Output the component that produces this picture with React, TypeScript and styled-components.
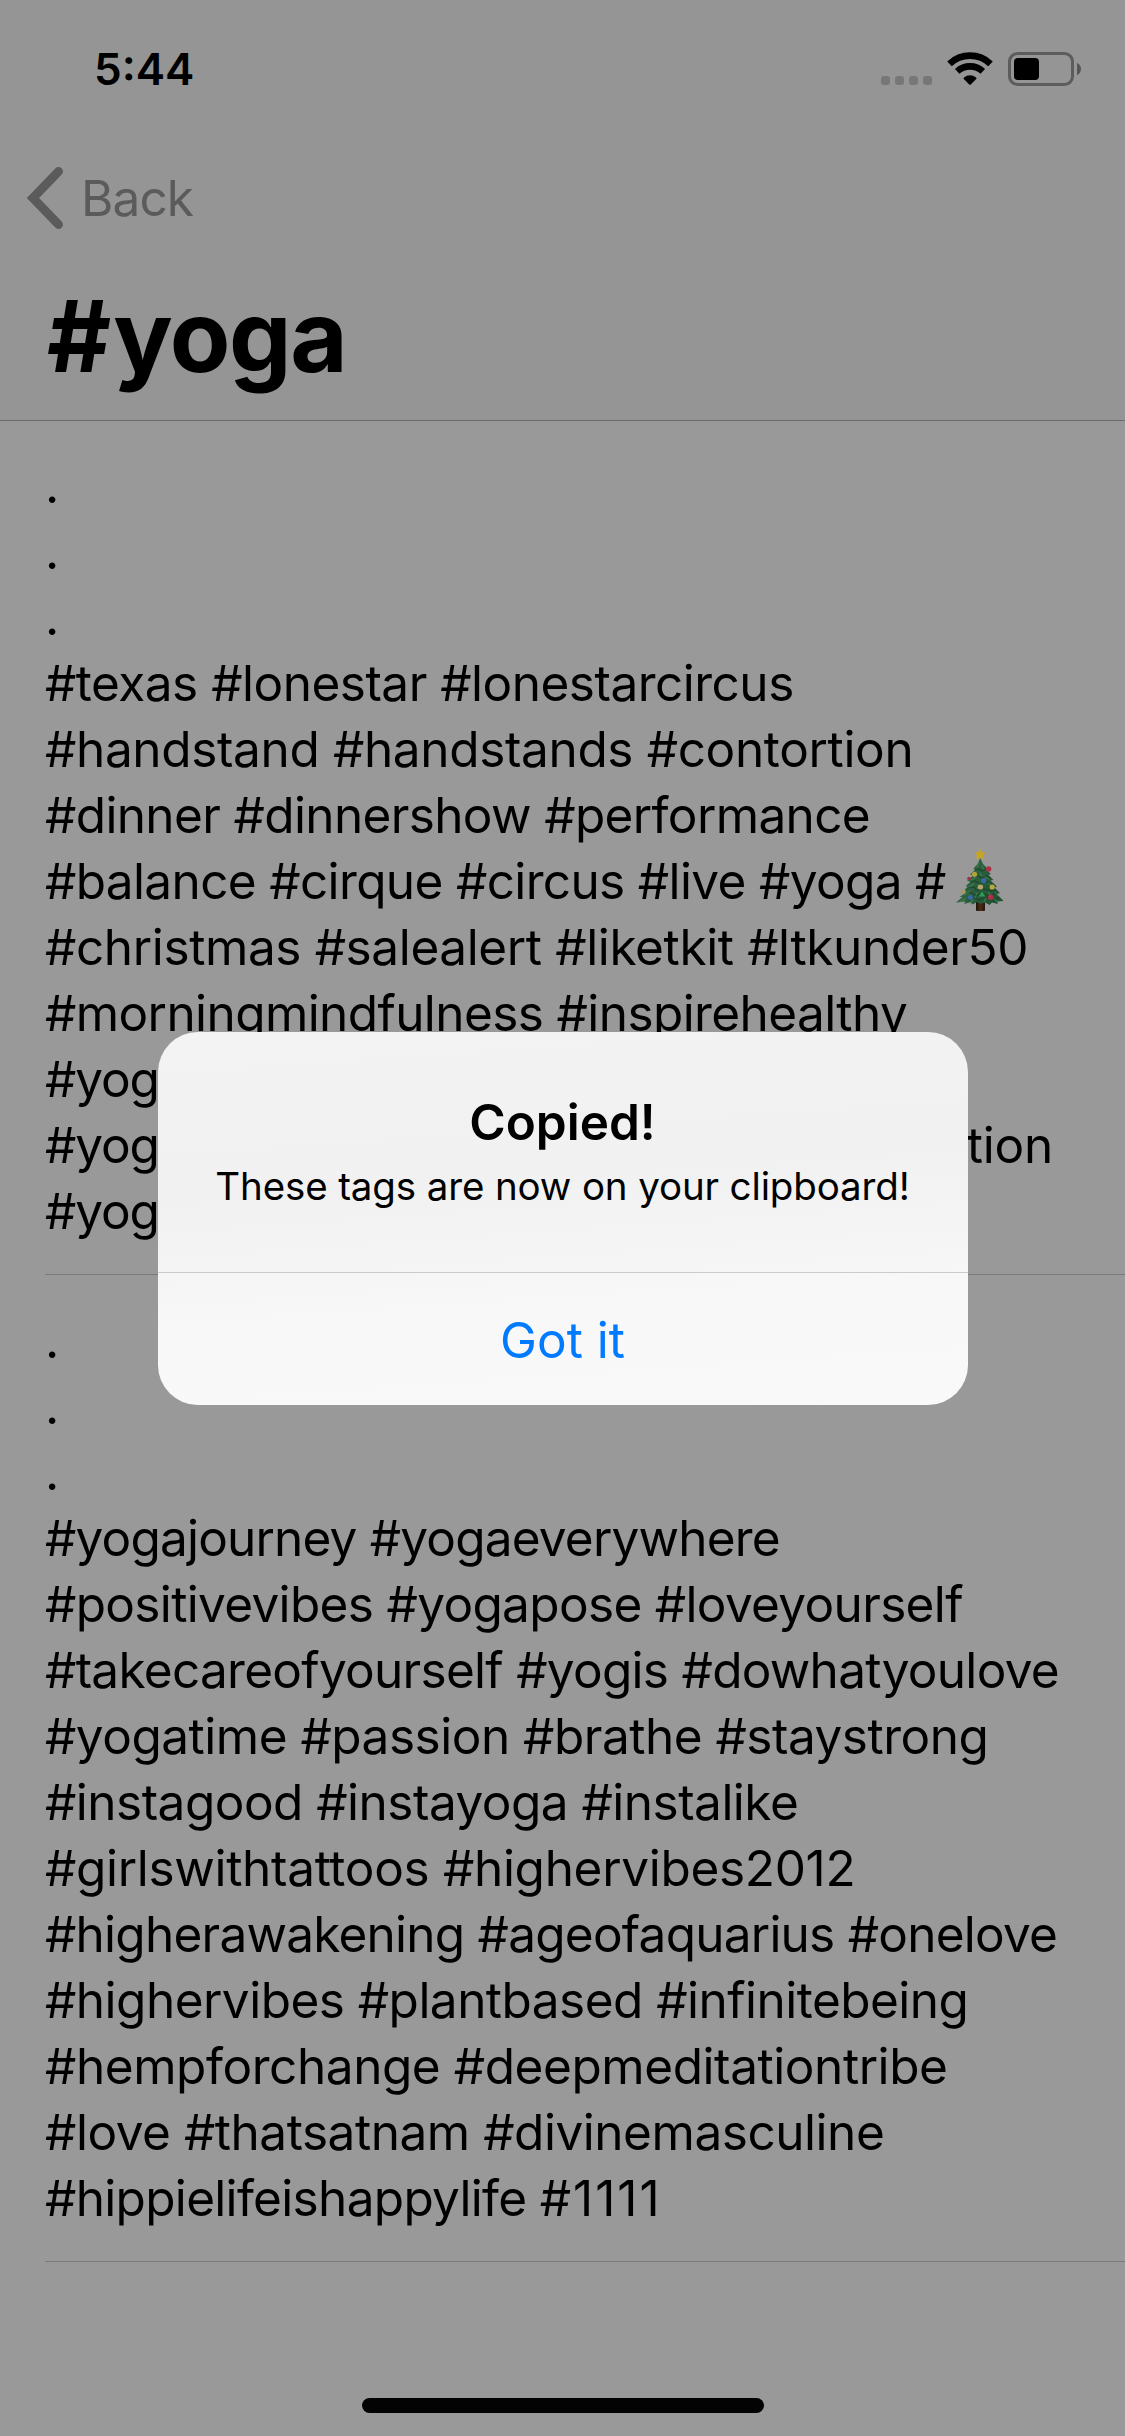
import React from 'react';
import styled, { createGlobalStyle } from 'styled-components';

const GlobalStyle = createGlobalStyle`
  *, *::before, *::after { box-sizing: border-box; }
  body {
    margin: 0;
    background: #999999;
    font-family: Inter, "Liberation Sans", sans-serif;
  }
`;

const Screen = styled.div`
  position: relative;
  display: flex;
  flex-direction: column;
  width: 1125px;
  height: 2436px;
  overflow: hidden;
  background: #999999;
  color: #000;
`;

const Header = styled.header`
  height: 421px;
  background: #959595;
  border-bottom: 1px solid #6b6b6b;
`;

const StatusBar = styled.div`
  display: flex;
  justify-content: space-between;
  height: 132px;
  padding: 42px 44px 0 94px;
`;

const Clock = styled.span`
  font-size: 44px;
  font-weight: 600;
  line-height: 54px;
`;

const StatusIcons = styled.div`
  display: flex;
  align-items: flex-end;
  gap: 15px;
  height: 44px;
`;

const SignalDots = styled.div`
  display: flex;
  gap: 5px;
  padding-bottom: 1px;
`;

const SignalDot = styled.i`
  width: 9px;
  height: 9px;
  border-radius: 3px;
  background: #777777;
`;

const WifiIcon = styled.svg`
  display: block;
  width: 46px;
  height: 33px;
  margin-bottom: 1px;
`;

const BatteryIcon = styled.svg`
  display: block;
  width: 73px;
  height: 34px;
`;

const NavBar = styled.nav`
  display: flex;
  align-items: center;
  height: 132px;
  padding-left: 26px;
`;

const BackButton = styled.button`
  display: flex;
  align-items: center;
  gap: 17px;
  padding: 0;
  border: 0;
  background: none;
  color: #5b5b5b;
  font: inherit;
  font-size: 49.5px;
  line-height: 60px;
  letter-spacing: -0.9px;
`;

const Chevron = styled.svg`
  display: block;
  width: 38px;
  height: 64px;
`;

const Title = styled.h1`
  margin: 12px 0 0 47px;
  font-size: 99px;
  font-weight: 700;
  line-height: 120px;
  letter-spacing: -1.4px;

  &::first-letter {
    letter-spacing: 2px;
  }
`;

const List = styled.main`
  flex: 1;
`;

const TagRow = styled.section`
  margin-left: 45px;
  padding: 31px 0 30px;
  border-bottom: 1px solid #7a7a7a;

  & + & {
    padding-top: 32px;
  }
`;

const Line = styled.p<{ $tracking?: number }>`
  display: flex;
  height: 66px;
  margin: 0;
  font-size: 49.5px;
  line-height: 66px;
  letter-spacing: ${({ $tracking = -0.5 }) => $tracking}px;
  white-space: pre;
`;

const LineEnd = styled.span`
  margin-left: auto;
  margin-right: 72px;
  letter-spacing: -0.2px;
`;

const Digits = styled.span`
  letter-spacing: 2px;
`;

const Tree = styled.svg`
  display: block;
  width: 60px;
  height: 72px;
  margin: -4px 0 0 5px;
`;

const HomeArea = styled.footer`
  display: flex;
  justify-content: center;
  height: 38px;
`;

const HomeIndicator = styled.div`
  width: 402px;
  height: 15px;
  border-radius: 8px;
  background: #030303;
`;

const Overlay = styled.div`
  position: absolute;
  inset: 0;
  display: flex;
  justify-content: center;
  align-items: flex-start;
  padding: 1032px 0 0 1px;
`;

const Dialog = styled.div`
  display: flex;
  flex-direction: column;
  width: 810px;
  height: 373px;
  border-radius: 40px;
  overflow: hidden;
  background: linear-gradient(176deg, #f3f3f3 0%, #f1f1f1 38%, #f5f5f5 62%, #f8f8f8 74%, #f9f9f9 100%);
`;

const DialogBody = styled.div`
  height: 240px;
  padding: 60px 1px 0 0;
  text-align: center;
`;

const DialogTitle = styled.h2`
  margin: 0;
  font-size: 49.5px;
  font-weight: 600;
  line-height: 60px;
`;

const DialogText = styled.p`
  margin: 10px 0 0;
  font-size: 38.5px;
  line-height: 48px;
  letter-spacing: -0.13px;
`;

const DialogAction = styled.button`
  flex: 1;
  padding: 2px 1px 0 0;
  border: 0;
  border-top: 1px solid #cbcbcb;
  background: rgba(255, 255, 255, 0.12);
  color: #007aff;
  font: inherit;
  font-size: 49.5px;
  line-height: 60px;
`;

type TagLine = { text: string; tracking?: number; tree?: boolean; end?: string; digits?: string };

const dots: TagLine[] = [{ text: '.' }, { text: '.' }, { text: '.' }];

const groups: TagLine[][] = [
  [
    ...dots,
    { text: '#texas #lonestar #lonestarcircus', tracking: -0.5 },
    { text: '#handstand #handstands #contortion', tracking: -0.35 },
    { text: '#dinner #dinnershow #performance', tracking: -0.63 },
    { text: '#balance #cirque #circus #live #yoga #', tracking: -0.64, tree: true },
    { text: '#christmas #salealert #liketkit #ltkunder50', tracking: -0.38 },
    { text: '#morningmindfulness #inspirehealthy', tracking: -0.59 },
    { text: '#yoga', tracking: -1.1 },
    { text: '#yoga', tracking: -1.1, end: 'tion' },
    { text: '#yoga', tracking: -1.1 },
  ],
  [
    ...dots,
    { text: '#yogajourney #yogaeverywhere', tracking: -0.81 },
    { text: '#positivevibes #yogapose #loveyourself', tracking: -0.66 },
    { text: '#takecareofyourself #yogis #dowhatyoulove', tracking: -0.71 },
    { text: '#yogatime #passion #brathe #staystrong', tracking: -0.49 },
    { text: '#instagood #instayoga #instalike', tracking: -0.51 },
    { text: '#girlswithtattoos #highervibes2012', tracking: -0.31 },
    { text: '#higherawakening #ageofaquarius #onelove', tracking: -0.76 },
    { text: '#highervibes #plantbased #infinitebeing', tracking: -0.52 },
    { text: '#hempforchange #deepmeditationtribe', tracking: -0.43 },
    { text: '#love #thatsatnam #divinemasculine', tracking: -0.46 },
    { text: '#hippielifeishappylife ', tracking: -0.68, digits: '#1111' },
  ],
];

const ChristmasTree = () => (
  <Tree viewBox="0 0 60 72" role="img" aria-label="Christmas tree">
    <defs>
      <linearGradient id="trunk" x1="0" x2="1" y1="0" y2="0">
        <stop offset="0" stopColor="#20130a" />
        <stop offset="0.5" stopColor="#4a2c17" />
        <stop offset="1" stopColor="#24150b" />
      </linearGradient>
      <linearGradient id="leaf" x1="0" x2="1" y1="0" y2="0.4">
        <stop offset="0" stopColor="#376f47" />
        <stop offset="0.5" stopColor="#2c603e" />
        <stop offset="1" stopColor="#225034" />
      </linearGradient>
    </defs>
    <rect x="25" y="55" width="9" height="12" rx="1" fill="url(#trunk)" />
    <path
      fill="url(#leaf)"
      d="M29.300 14L32 20L36.500 24.500L35 25.500L40 30L37.500 31L42.500 36L39.500 36.500L46 42.500L43.500 43.500L49 49L46 50L52.500 57L46 57.500L47 60L41 58.500L38.500 61L34 58.500L29.500 60L26 58L21.500 60.500L19.500 58L13.500 60L14 57.500L5 58.500L11.500 53L8.500 53L15 48.500L10.500 48L17 43L14.500 42L20 37.500L16 37L22 31.500L19 30.500L24 26L22.500 24.500L26.500 20Z"
    />
    <g fill="none" stroke="#193f29" strokeWidth="1.200" strokeLinecap="round" opacity="0.75">
      <path d="M24 26l4-1 3 2 4-2M22 32l5 0 3 2 6-2 3 2M19 38l5-1 5 3 6-2 6 2M16 44l7-1 3 3 8-1 4 2 6-1M13 50l6-2 6 4 6-3 5 3 8-2M17 56l6-2 5 2 6-3 7 3 6-2" />
    </g>
    <g fill="none" stroke="#448957" strokeWidth="1.100" strokeLinecap="round" opacity="0.75">
      <path d="M28 18l-2 5M31 22l2 3M25 28l-3 3M29 29l2 3M24 34l-4 2M34 33l4 2M23 40l-5 3M28 40l-2 5M37 39l4 3M19 47l-6 4M26 49l-2 5M37 48l4 4M44 48l3 4M14 55l-5 3M22 56l-3 3M35 54l-2 4M43 55l4 3" />
    </g>
    <path
      fill="#c7a524"
      stroke="#c7a524"
      strokeWidth="0.800"
      strokeLinejoin="round"
      d="M29 5.400L30.700 8.700L34 9.200L31.700 11.600L32.300 15L29 13.400L25.700 15L26.300 11.600L24 9.200L27.300 8.700Z"
    />
    <path fill="#2f9b55" d="M31 47.500L34.500 52.500L27.500 52.500Z" />
    <circle cx="37.700" cy="25" r="2.700" fill="#ac3046" />
    <circle cx="23.500" cy="30.300" r="2.600" fill="#b1a13c" />
    <circle cx="18" cy="34.500" r="1.800" fill="#a82d4b" />
    <circle cx="32.700" cy="36.800" r="2.700" fill="#3969a0" />
    <circle cx="29.500" cy="43" r="2.600" fill="#b3a568" />
    <circle cx="41.200" cy="43" r="2.600" fill="#b8aa3c" />
    <circle cx="12.500" cy="47.700" r="2.300" fill="#a99a62" />
    <circle cx="19.500" cy="53.500" r="2.500" fill="#3a68a2" />
    <circle cx="39.700" cy="53.200" r="2.700" fill="#ae3046" />
  </Tree>
);

const Wifi = () => (
  <WifiIcon viewBox="0 0 46 33">
    <g fill="none" stroke="#000">
      <path strokeWidth="6.600" d="M2.500 11.800A29.700 29.700 0 0 1 43.500 11.800" />
      <path strokeWidth="6.600" d="M10.200 19.400A18.700 18.700 0 0 1 35.800 19.400" />
    </g>
    <path
      fill="#000"
      d="M22.200 32.500L16.800 27.100Q16.100 26.300 17 25.500A9.500 9.500 0 0 1 29 25.500Q29.900 26.300 29.200 27.100L23.800 32.500Q23 33.200 22.200 32.500Z"
    />
  </WifiIcon>
);

const Battery = () => (
  <BatteryIcon viewBox="0 0 73 34">
    <rect x="1.500" y="1.500" width="63" height="31" rx="8" fill="none" stroke="#5c5c5c" strokeWidth="3" />
    <rect x="6" y="6" width="25" height="22" rx="4" fill="#000" />
    <path d="M69 11C71.800 12.200 73 14.400 73 17S71.800 21.800 69 23Z" fill="#555555" />
  </BatteryIcon>
);

export default function App() {
  return (
    <>
      <GlobalStyle />
      <Screen>
        <Header>
          <StatusBar>
            <Clock>5:44</Clock>
            <StatusIcons>
              <SignalDots>
                <SignalDot />
                <SignalDot />
                <SignalDot />
                <SignalDot />
              </SignalDots>
              <Wifi />
              <Battery />
            </StatusIcons>
          </StatusBar>
          <NavBar>
            <BackButton>
              <Chevron viewBox="0 0 38 64">
                <path
                  d="M32.500 5.500L7 32L32.500 58.500"
                  fill="none"
                  stroke="currentColor"
                  strokeWidth="9"
                  strokeLinecap="round"
                  strokeLinejoin="miter"
                />
              </Chevron>
              Back
            </BackButton>
          </NavBar>
          <Title>
            #<span>yoga</span>
          </Title>
        </Header>
        <List>
          {groups.map((lines, g) => (
            <TagRow key={g}>
              {lines.map((line, i) => (
                <Line key={i} $tracking={line.tracking}>
                  {line.text}
                  {line.tree && <ChristmasTree />}
                  {line.digits && <Digits>{line.digits}</Digits>}
                  {line.end && <LineEnd>{line.end}</LineEnd>}
                </Line>
              ))}
            </TagRow>
          ))}
        </List>
        <HomeArea>
          <HomeIndicator />
        </HomeArea>
        <Overlay>
          <Dialog role="alertdialog">
            <DialogBody>
              <DialogTitle>Copied!</DialogTitle>
              <DialogText>These tags are now on your clipboard!</DialogText>
            </DialogBody>
            <DialogAction>Got it</DialogAction>
          </Dialog>
        </Overlay>
      </Screen>
    </>
  );
}
